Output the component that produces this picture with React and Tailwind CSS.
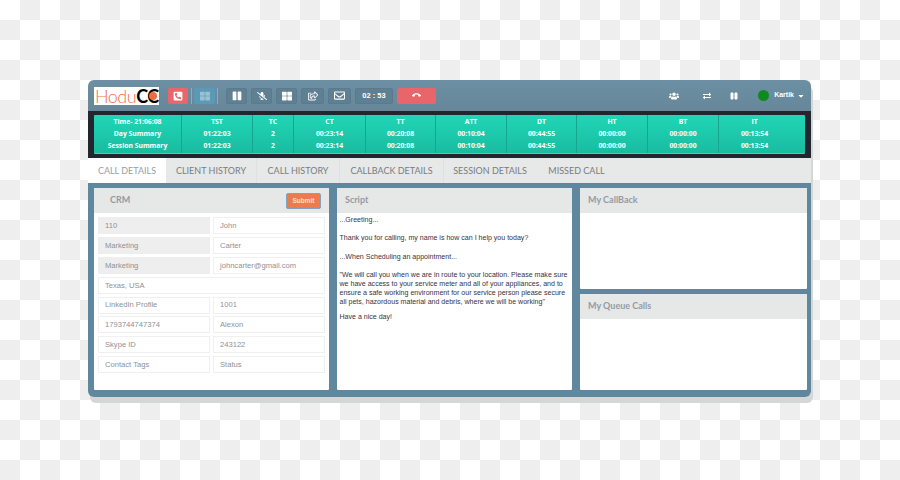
import React from 'react';
import {
  FaPhoneSquareAlt, FaThLarge, FaPause, FaMicrophoneSlash, FaRegShareSquare,
  FaRegEnvelope, FaPhone, FaUsers, FaExchangeAlt, FaCaretDown,
} from 'react-icons/fa';

const STATS = [
  { w: 'w-[88px]', label: 'Time- 21:06:08', day: 'Day Summary', session: 'Session Summary' },
  { w: 'w-[71px]', label: 'TST', day: '01:22:03', session: '01:22:03' },
  { w: 'w-[41px]', label: 'TC', day: '2', session: '2' },
  { w: 'w-[72px]', label: 'CT', day: '00:23:14', session: '00:23:14' },
  { w: 'w-[70px]', label: 'TT', day: '00:20:08', session: '00:20:08' },
  { w: 'w-[71px]', label: 'ATT', day: '00:10:04', session: '00:10:04' },
  { w: 'w-[70px]', label: 'DT', day: '00:44:55', session: '00:44:55' },
  { w: 'w-[71px]', label: 'HT', day: '00:00:00', session: '00:00:00' },
  { w: 'w-[71px]', label: 'BT', day: '00:00:00', session: '00:00:00' },
  { w: 'w-[87px] pr-[16px]', label: 'IT', day: '00:13:54', session: '00:13:54' },
];

const TABS = [
  { label: 'CALL DETAILS', w: 'w-[78px]' },
  { label: 'CLIENT HISTORY', w: 'w-[91px]' },
  { label: 'CALL HISTORY', w: 'w-[83px]' },
  { label: 'CALLBACK DETAILS', w: 'w-[104px]' },
  { label: 'SESSION DETAILS', w: 'w-[92px]' },
  { label: 'MISSED CALL', w: 'w-[81px]' },
];

const FORM = [
  [['110', true], ['John']],
  [['Marketing', true], ['Carter']],
  [['Marketing', true], ['johncarter@gmail.com']],
  [['Texas, USA']],
  [['LinkedIn Profile'], ['1001']],
  [['1793744747374'], ['Alexon']],
  [['Skype ID'], ['243122']],
  [['Contact Tags'], ['Status']],
];

const ToolBtn = ({ children, w = 'w-[21px]' }) => (
  <div className={`${w} h-[16px] rounded-[2px] border border-[#5a7a8d] bg-[#5f7f92] flex items-center justify-center text-white`}>
    {children}
  </div>
);

const PanelHead = ({ title, children, pl = 'pl-[8px]' }) => (
  <div className={`h-[25px] shrink-0 bg-[#e6e7e7] flex items-center justify-between ${pl} pr-[8px] font-['Lato',sans-serif] font-bold text-[9px] text-[#949ba4]`}>
    <span className="-mt-[1px]">{title}</span>
    {children}
  </div>
);

const Logo = () => (
  <div className="w-[65px] h-[18px] bg-white flex items-center pl-[1px] relative leading-none font-['Lato',sans-serif] text-[18px]">
    <span className="font-light text-[#f2714f] tracking-[-0.5px]">Hodu</span>
    <span className="font-bold text-black tracking-[-0.5px]">CC</span>
    <span className="absolute left-[55px] top-[5px] w-[8px] h-[8px] rounded-full bg-[#ee6a45]" />
  </div>
);

export default function App() {
  return (
    <div className="w-[900px] h-[480px] overflow-hidden pt-[80px] pl-[88px] bg-[repeating-conic-gradient(#eeeeee_0_25%,#ffffff_0_50%)] bg-[length:40px_40px]">
      <div className="w-[723px] h-[317px] flex flex-col rounded-[6px] overflow-hidden shadow-[2px_6px_0_#d5d6d6]">
        {/* top toolbar */}
        <div className="h-[31px] shrink-0 flex items-center pl-[6px] pr-[6px] bg-gradient-to-b from-[#6c8fa3] to-[#678799]">
          <Logo />
          <div className="ml-[9px] w-[20px] h-[16px] rounded-[2px] bg-[#e8666a] flex items-center justify-center text-white">
            <FaPhoneSquareAlt size={10} />
          </div>
          <div className="ml-[3px] w-px h-[16px] bg-[#93abb9]" />
          <div className="ml-[2px] w-[21px] h-[16px] rounded-[2px] bg-[#5a9ab6] flex items-center justify-center text-[#9cc0d0]">
            <FaThLarge size={10} />
          </div>
          <div className="ml-[2px] w-px h-[16px] bg-[#93abb9]" />
          <div className="ml-[8px] flex items-center gap-[4px]">
            <ToolBtn><FaPause size={10} /></ToolBtn>
            <ToolBtn><FaMicrophoneSlash size={10} /></ToolBtn>
            <ToolBtn><FaThLarge size={10} /></ToolBtn>
            <ToolBtn w="w-[23px]"><FaRegShareSquare size={10} /></ToolBtn>
            <ToolBtn w="w-[23px]"><FaRegEnvelope size={11} /></ToolBtn>
            <ToolBtn w="w-[38px]">
              <span className="font-['Liberation_Sans',sans-serif] font-bold text-[7.5px]">02 : 53</span>
            </ToolBtn>
          </div>
          <div className="ml-[4px] w-[39px] h-[16px] rounded-[2px] bg-[#e8666a] flex items-center justify-center text-white">
            <FaPhone size={7} className="rotate-[225deg]" />
          </div>
          <div className="ml-auto flex items-center text-white">
            <FaUsers size={10} />
            <FaExchangeAlt size={8} className="ml-[24px]" />
            <FaPause size={8} className="ml-[19px]" />
            <div className="ml-[20px] w-[11px] h-[11px] rounded-full bg-[#0f8a1c]" />
            <span className="ml-[5px] font-['Liberation_Sans',sans-serif] font-bold text-[7px]">Kartik</span>
            <FaCaretDown size={8} className="ml-[3px]" />
          </div>
        </div>

        {/* summary strip */}
        <div className="h-[47px] shrink-0 bg-[#22262e] px-[6px] pt-[4px] pb-[4px]">
          <div className="h-[39px] flex rounded-[1px] bg-gradient-to-b from-[#20d6b6] to-[#1abca1] border-b border-[#7fb5ab]">
            {STATS.map((s, i) => (
              <div
                key={s.label}
                className={`${s.w} shrink-0 flex flex-col items-center justify-center text-center text-white font-['Open_Sans',sans-serif] font-bold text-[6.8px] leading-[11.7px] ${i < STATS.length - 1 ? 'border-r border-[#17a58e]' : ''}`}
              >
                <span>{s.label}</span>
                <span>{s.day}</span>
                <span>{s.session}</span>
              </div>
            ))}
          </div>
        </div>

        {/* tabs */}
        <div className="h-[25px] shrink-0 flex bg-[#e7e8e8] font-['Lato',sans-serif] text-[9px] text-[#777d80]">
          {TABS.map((t, i) => (
            <div
              key={t.label}
              className={`${t.w} shrink-0 flex items-center justify-center ${i === 0 ? 'bg-white text-[#999ea2]' : ''} ${i > 0 && i < 4 ? 'border-r border-[#dfe0e0]' : ''}`}
            >
              {t.label}
            </div>
          ))}
        </div>

        {/* content */}
        <div className="flex-1 min-h-0 flex bg-[#5f879d] pl-[6px] pt-[5px] pb-[7px] gap-[8px]">
          <div className="w-[235px] shrink-0 bg-white rounded-[1px] flex flex-col">
            <PanelHead title="CRM" pl="pl-[16px]">
              <div className="w-[35px] h-[16px] rounded-[2px] bg-[#ee7b4e] border border-[#7fa3c0] flex items-center justify-center font-['Liberation_Sans',sans-serif] font-bold text-[6.5px] text-[#fbe0d4]">
                Submit
              </div>
            </PanelHead>
            <div className="flex flex-col gap-[2.8px] px-[4px] pt-[4.4px] font-['Liberation_Sans',sans-serif] text-[7.6px] text-[#8d9198]">
              {FORM.map((row, r) => (
                <div key={r} className="flex gap-[3px]">
                  {row.map(([text, filled]) => (
                    <div
                      key={text}
                      className={`flex-1 h-[17px] flex items-center pl-[6px] border ${filled ? 'bg-[#eeeeee] border-[#eeeeee]' : 'bg-white border-[#f0f0f0]'}`}
                    >
                      {text}
                    </div>
                  ))}
                </div>
              ))}
            </div>
          </div>

          <div className="w-[235px] shrink-0 bg-white rounded-[1px] flex flex-col">
            <PanelHead title="Script" />
            <div className="pl-[2.5px] pr-[4px] pt-[2px] font-['Liberation_Sans',sans-serif] text-[7.05px] leading-[9.1px] text-[#38333f] flex flex-col gap-[9.3px]">
              <p>...Greeting...</p>
              <p>Thank you for calling, my name is how can I help you today?</p>
              <p>...When Scheduling an appointment...</p>
              <p className="-mt-[0.3px] mb-[-3.5px]">"We will call you when we are in route to your location. Please make sure we have access to your service meter and all of your appliances, and to ensure a safe working environment for our service person please secure all pets, hazordous material and debris, where we will be working"</p>
              <p>Have a nice day!</p>
            </div>
          </div>

          <div className="w-[227px] shrink-0 flex flex-col gap-[5px]">
            <div className="h-[101px] bg-white rounded-[1px]">
              <PanelHead title="My CallBack" />
            </div>
            <div className="flex-1 bg-white rounded-[1px]">
              <PanelHead title="My Queue Calls" />
            </div>
          </div>
        </div>
      </div>
    </div>
  );
}
